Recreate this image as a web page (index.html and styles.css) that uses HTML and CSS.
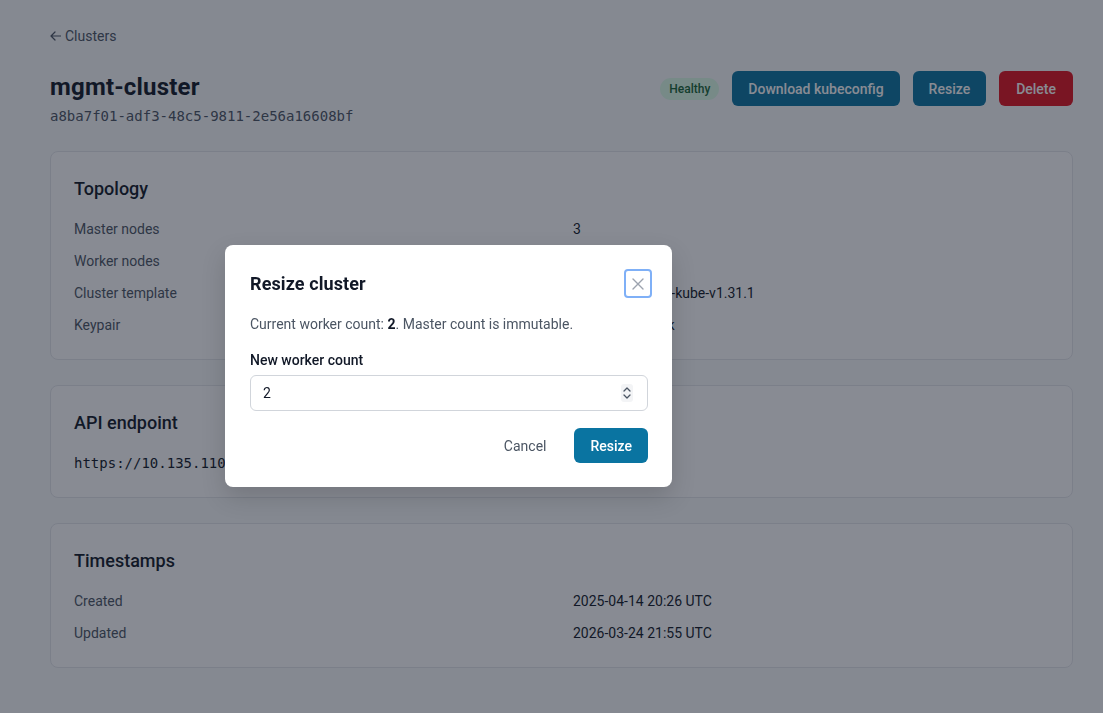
FILE: index.html
```html
<!DOCTYPE html>
<html lang="en">

<head>
    <meta charset="UTF-8" />
    <meta name="viewport" content="width=device-width, initial-scale=1" />
    <title>mgmt-cluster</title>
    <link rel="stylesheet" href="styles.css">
</head>

<body>
    <div class="page">
        <a class="back-link" href="#">
            <svg width="11" height="10" viewBox="0 0 11 10" fill="none" stroke="currentColor" stroke-width="1.2" stroke-linecap="round" stroke-linejoin="round">
                <path d="M10.5 5 H1 M5 1 L1 5 L5 9" />
            </svg>
            Clusters
        </a>

        <div class="page-header">
            <div class="page-title">
                <h1>mgmt-cluster</h1>
                <div class="uuid">a8ba7f01-adf3-48c5-9811-2e56a16608bf</div>
            </div>
            <div class="actions">
                <span class="badge">Healthy</span>
                <button class="btn btn-primary">Download kubeconfig</button>
                <button class="btn btn-primary">Resize</button>
                <button class="btn btn-danger">Delete</button>
            </div>
        </div>

        <div class="card">
            <h2>Topology</h2>
            <div class="rows">
                <div class="label">Master nodes</div>
                <div class="value">3</div>
                <div class="label">Worker nodes</div>
                <div class="value">2</div>
                <div class="label">Cluster template</div>
                <div class="value">fedora-coreos-1-kube-v1.31.1</div>
                <div class="label">Keypair</div>
                <div class="value">deploy-ops-desk</div>
            </div>
        </div>

        <div class="card">
            <h2>API endpoint</h2>
            <div class="mono">https://10.135.110.24:6443</div>
        </div>

        <div class="card">
            <h2>Timestamps</h2>
            <div class="rows">
                <div class="label">Created</div>
                <div class="value">2025-04-14 20:26 UTC</div>
                <div class="label">Updated</div>
                <div class="value">2026-03-24 21:55 UTC</div>
            </div>
        </div>
    </div>

    <div class="backdrop"></div>

    <div class="modal">
        <div class="modal-header">
            <h3>Resize cluster</h3>
            <button class="close-btn" aria-label="Close">
                <svg width="14" height="14" viewBox="0 0 14 14" fill="none" stroke="currentColor" stroke-width="1.4" stroke-linecap="round">
                    <path d="M2 2 L12 12 M12 2 L2 12" />
                </svg>
            </button>
        </div>
        <p class="modal-text">Current worker count: <strong>2</strong>. Master count is immutable.</p>
        <label class="field-label" for="workers">New worker count</label>
        <div class="input-box">
            <input id="workers" type="text" value="2" />
            <span class="spinner">
                <svg width="12" height="18" viewBox="0 0 12 18" fill="none" stroke="#4b5563" stroke-width="1.3" stroke-linecap="round" stroke-linejoin="round">
                    <path d="M3 7 L6 4 L9 7" />
                    <path d="M3 11 L6 14 L9 11" />
                </svg>
            </span>
        </div>
        <div class="modal-footer">
            <button class="btn btn-ghost">Cancel</button>
            <button class="btn btn-primary">Resize</button>
        </div>
    </div>
</body>

</html>
```

FILE: styles.css
```css
body {
    margin: 0;
    font-family: "Roboto", "Noto Sans", sans-serif;
    background: #f9fafb;
    color: #111827;
}

.page {
    padding: 26px 30px 40px 50px;
    display: flex;
    flex-direction: column;
}

.back-link {
    display: flex;
    align-items: center;
    gap: 4px;
    font-size: 14px;
    line-height: 20px;
    color: #4b5563;
    text-decoration: none;
    align-self: flex-start;
}

.page-header {
    display: flex;
    justify-content: space-between;
    align-items: flex-start;
    margin-top: 25px;
    margin-bottom: 25px;
}

.page-title h1 {
    margin: 0;
    font-size: 24px;
    line-height: 32px;
    font-weight: 700;
    letter-spacing: 0.2px;
}

.uuid,
.mono {
    font-family: "DejaVu Sans Mono", "Liberation Mono", monospace;
    font-size: 14px;
    line-height: 20px;
    color: #4b5563;
}

.uuid {
    margin-top: 3px;
}

.mono {
    color: #111827;
}

.actions {
    display: flex;
    align-items: center;
    gap: 13px;
}

.badge {
    background: #dcfce7;
    color: #166534;
    font-size: 12px;
    font-weight: 500;
    line-height: 22px;
    padding: 0 9px;
    border-radius: 999px;
}

.btn {
    font-family: inherit;
    font-size: 14px;
    font-weight: 500;
    height: 35px;
    padding: 0 16px;
    border: none;
    border-radius: 6px;
    cursor: pointer;
}

.btn-primary {
    background: #0a74a1;
    color: #fff;
}

.btn-danger {
    background: #e0131f;
    color: #fff;
    padding: 0 17px;
}

.btn-ghost {
    background: transparent;
    color: #4b5563;
    font-weight: 400;
    padding: 0 12px;
}

.card {
    background: #fff;
    border: 1px solid #e5e7eb;
    border-radius: 8px;
    padding: 24px 24px 24px 23px;
    margin-bottom: 25px;
}

.card h2 {
    margin: 1px 0 18px;
    font-size: 18px;
    line-height: 24px;
    font-weight: 500;
}

.rows {
    display: grid;
    grid-template-columns: 1fr 1fr;
    column-gap: 24px;
    row-gap: 12px;
    font-size: 14px;
    line-height: 20px;
}

.label {
    color: #4b5563;
}

.value {
    color: #111827;
}

.backdrop {
    position: fixed;
    inset: 0;
    background: rgba(17, 24, 39, 0.5);
}

.modal {
    position: fixed;
    left: 225px;
    top: 245px;
    width: 398px;
    padding: 24px 24px 24px 25px;
    background: #fff;
    border-radius: 8px;
    box-shadow: 0 10px 25px rgba(0, 0, 0, 0.15);
}

.modal-header {
    display: flex;
    justify-content: space-between;
    align-items: center;
    margin-bottom: 16px;
}

.modal-header h3 {
    margin: 0;
    font-size: 18px;
    line-height: 28px;
    font-weight: 700;
    letter-spacing: 0.1px;
}

.close-btn {
    width: 28px;
    height: 29px;
    margin-right: -4px;
    display: flex;
    align-items: center;
    justify-content: center;
    background: #fff;
    color: #9ca3af;
    border: 2px solid #7fb0f7;
    border-radius: 4px;
    padding: 0;
}

.modal-text {
    margin: 0 0 16px;
    font-size: 14px;
    line-height: 20px;
    color: #4b5563;
}

.modal-text strong {
    color: #111827;
}

.field-label {
    display: block;
    font-size: 14px;
    line-height: 20px;
    font-weight: 500;
    margin-bottom: 5px;
}

.input-box {
    display: flex;
    align-items: center;
    height: 34px;
    border: 1px solid #d1d5db;
    border-radius: 6px;
    padding: 0 12px;
}

.input-box input {
    flex: 1;
    border: none;
    outline: none;
    font-family: inherit;
    font-size: 14px;
    color: #111827;
    padding: 0;
    background: transparent;
}

.spinner {
    display: flex;
    background: #f3f4f6;
    border-radius: 3px;
    margin-right: 2px;
}

.modal-footer {
    display: flex;
    justify-content: flex-end;
    gap: 16px;
    margin-top: 17px;
}
```
